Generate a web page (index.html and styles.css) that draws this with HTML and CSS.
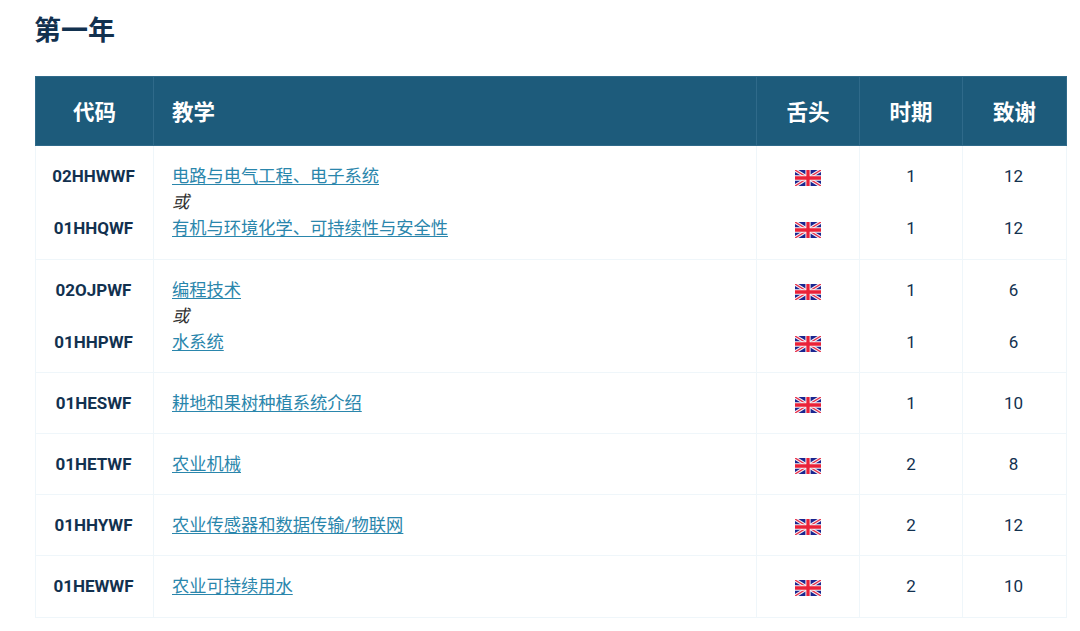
FILE: index.html
```html
<!DOCTYPE html>
<html lang="zh">
<head>
<meta charset="utf-8">
<title>第一年</title>
<link rel="stylesheet" href="styles.css">
</head>
<body>
<svg class="defs" width="0" height="0" aria-hidden="true">
  <defs>
    <symbol id="uk" viewBox="0 0 60 36" preserveAspectRatio="none">
      <rect width="60" height="36" fill="#1a2590"/>
      <path d="M0 0 60 36M60 0 0 36" stroke="#f4f0f4" stroke-width="8"/>
      <path d="M0 0 60 36M60 0 0 36" stroke="#e8304a" stroke-width="3"/>
      <path d="M30 0V36M0 18H60" stroke="#f8f4f6" stroke-width="12"/>
      <path d="M30 0V36M0 18H60" stroke="#ea2238" stroke-width="7.5"/>
    </symbol>
  </defs>
</svg>
<main class="page">
  <h2 class="title">第一年</h2>
  <table class="plan">
    <colgroup>
      <col class="c-code"><col class="c-name"><col class="c-lang"><col class="c-per"><col class="c-cred">
    </colgroup>
    <thead>
      <tr><th>代码</th><th class="left">教学</th><th>舌头</th><th>时期</th><th>致谢</th></tr>
    </thead>
    <tbody>
      <tr>
        <td class="code"><span class="ln">02HHWWF</span><span class="ln">&nbsp;</span><span class="ln">01HHQWF</span></td>
        <td class="left"><span class="ln"><a href="#">电路与电气工程、电子系统</a></span><span class="ln or">或</span><span class="ln"><a href="#">有机与环境化学、可持续性与安全性</a></span></td>
        <td><span class="ln"><svg class="flag"><use href="#uk"/></svg></span><span class="ln">&nbsp;</span><span class="ln"><svg class="flag"><use href="#uk"/></svg></span></td>
        <td><span class="ln">1</span><span class="ln">&nbsp;</span><span class="ln">1</span></td>
        <td class="cred"><span class="ln">12</span><span class="ln">&nbsp;</span><span class="ln">12</span></td>
      </tr>
      <tr>
        <td class="code"><span class="ln">02OJPWF</span><span class="ln">&nbsp;</span><span class="ln">01HHPWF</span></td>
        <td class="left"><span class="ln"><a href="#">编程技术</a></span><span class="ln or">或</span><span class="ln"><a href="#">水系统</a></span></td>
        <td><span class="ln"><svg class="flag"><use href="#uk"/></svg></span><span class="ln">&nbsp;</span><span class="ln"><svg class="flag"><use href="#uk"/></svg></span></td>
        <td><span class="ln">1</span><span class="ln">&nbsp;</span><span class="ln">1</span></td>
        <td class="cred"><span class="ln">6</span><span class="ln">&nbsp;</span><span class="ln">6</span></td>
      </tr>
      <tr>
        <td class="code"><span class="ln">01HESWF</span></td>
        <td class="left"><span class="ln"><a href="#">耕地和果树种植系统介绍</a></span></td>
        <td><span class="ln"><svg class="flag"><use href="#uk"/></svg></span></td>
        <td><span class="ln">1</span></td>
        <td class="cred"><span class="ln">10</span></td>
      </tr>
      <tr>
        <td class="code"><span class="ln">01HETWF</span></td>
        <td class="left"><span class="ln"><a href="#">农业机械</a></span></td>
        <td><span class="ln"><svg class="flag"><use href="#uk"/></svg></span></td>
        <td><span class="ln">2</span></td>
        <td class="cred"><span class="ln">8</span></td>
      </tr>
      <tr>
        <td class="code"><span class="ln">01HHYWF</span></td>
        <td class="left"><span class="ln"><a href="#">农业传感器和数据传输/物联网</a></span></td>
        <td><span class="ln"><svg class="flag"><use href="#uk"/></svg></span></td>
        <td><span class="ln">2</span></td>
        <td class="cred"><span class="ln">12</span></td>
      </tr>
      <tr>
        <td class="code"><span class="ln">01HEWWF</span></td>
        <td class="left"><span class="ln"><a href="#">农业可持续用水</a></span></td>
        <td><span class="ln"><svg class="flag"><use href="#uk"/></svg></span></td>
        <td><span class="ln">2</span></td>
        <td class="cred"><span class="ln">10</span></td>
      </tr>
    </tbody>
  </table>
</main>
</body>
</html>
```
FILE: styles.css
```css
* { box-sizing: border-box; }
html, body { margin: 0; background: #fff; }
body {
  font-family: Roboto, "Noto Sans CJK SC", sans-serif;
  color: #12314f;
  overflow: hidden;
}
.defs { position: absolute; }
.page { padding: 12px 14px 0 35px; }
.title {
  margin: 0 0 26px;
  margin-left: -1px;
  font-size: 27px;
  line-height: 38px;
  font-weight: 700;
  color: #12314f;
}
.plan {
  width: 1031px;
  border-collapse: collapse;
  table-layout: fixed;
  font-size: 17px;
}
.c-code { width: 118px; }
.c-name { width: 603px; }
.c-lang { width: 103px; }
.c-per { width: 103px; }
.c-cred { width: 104px; }
th {
  height: 69px;
  padding: 0 18px 2px;
  background: #1d5b7b;
  color: #fff;
  font-size: 21.5px;
  font-weight: 700;
  text-align: center;
  border: 1px solid #2f6a8a;
}
td {
  padding: 17px 18px;
  text-align: center;
  vertical-align: top;
  border: 1px solid #eff6fa;
  line-height: 26px;
}
tbody tr:first-child td { padding-bottom: 18px; }
tbody tr:last-child td { padding-bottom: 18px; }
th.left, td.left { text-align: left; }
td.cred { padding-right: 20px; }
.ln { display: block; height: 26px; }
.code { font-weight: 700; padding-left: 3px; padding-right: 5px; }
a {
  color: #2a86ac;
  font-size: 17.25px;
  text-decoration: underline;
  text-decoration-thickness: 1.4px;
  text-underline-offset: 2px;
}
.or { font-style: italic; font-size: 17.25px; color: #333; }
.flag { width: 26px; height: 16px; display: inline-block; vertical-align: middle; margin-top: 1px; }
```
